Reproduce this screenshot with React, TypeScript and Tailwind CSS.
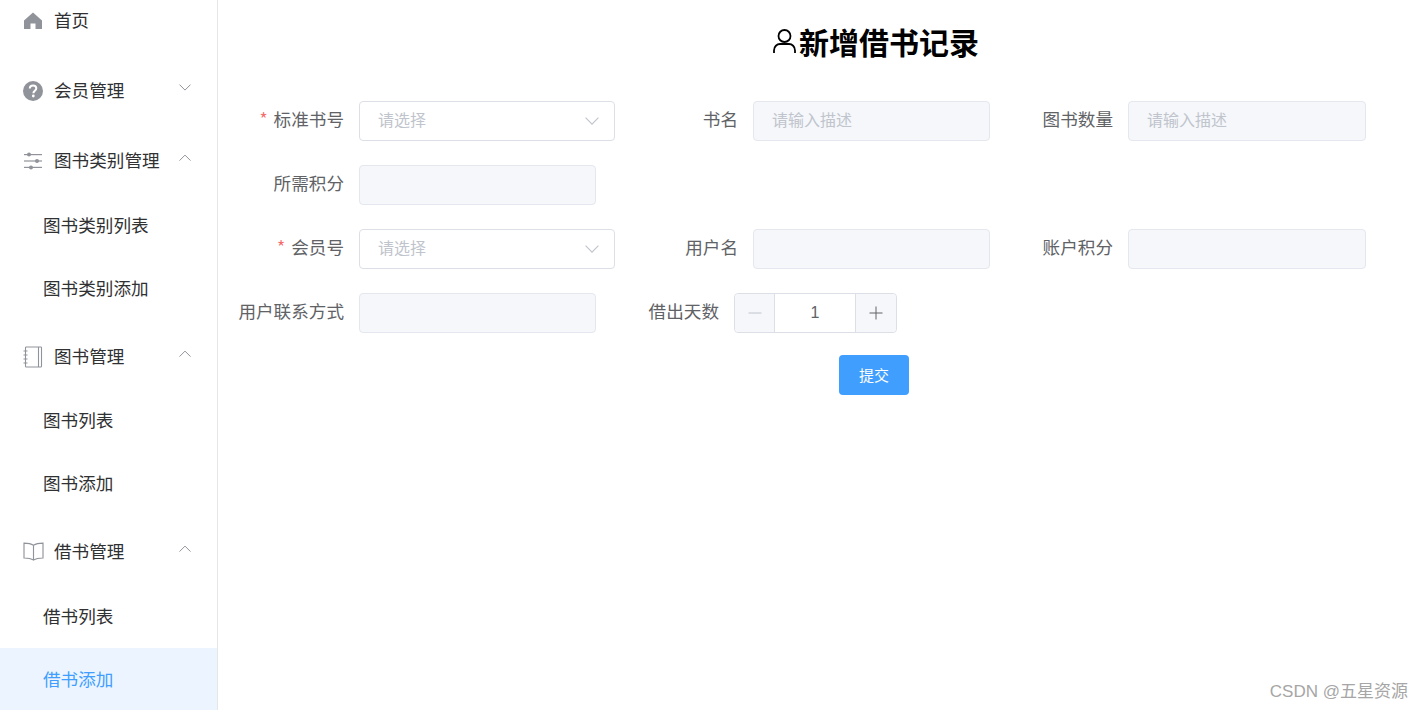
import React from "react";

const FONT = "font-['Microsoft_YaHei','Noto_Sans_CJK_SC','Noto_Sans',sans-serif]";

function HomeIcon() {
  return (
    <svg width="20" height="20" viewBox="0 0 20 20" fill="#909399">
      <path d="M10 1.500 19 9.500 19 18 12.500 18 12.500 12.500 7.500 12.500 7.500 18 1 18 1 9.500Z" />
    </svg>
  );
}

function QuestionIcon() {
  return (
    <svg width="22" height="22" viewBox="0 0 22 22">
      <circle cx="11" cy="11" r="10" fill="#909399" />
      <path d="M7.800 8.600c0-2 1.400-3.200 3.300-3.200s3.200 1.200 3.200 2.900c0 2.400-2.900 2.500-2.900 4.900" fill="none" stroke="#fff" strokeWidth="2" />
      <circle cx="11.300" cy="16" r="1.400" fill="#fff" />
    </svg>
  );
}

function SlidersIcon() {
  return (
    <svg width="20" height="20" viewBox="0 0 20 20" fill="#909399">
      <rect x="1" y="3" width="18" height="1.200" />
      <rect x="1" y="9.400" width="18" height="1.200" />
      <rect x="1" y="15.800" width="18" height="1.200" />
      <circle cx="6" cy="3.600" r="2" />
      <circle cx="14" cy="10" r="2" />
      <circle cx="8" cy="16.400" r="2" />
    </svg>
  );
}

function NotebookIcon() {
  return (
    <svg width="20" height="22" viewBox="0 0 20 22" fill="none" stroke="#909399" strokeWidth="1.100">
      <rect x="2.500" y="1" width="16" height="20" rx="0.800" />
      <path d="M15.500 1v20M0.500 5h4M0.500 9h4M0.500 13h4M0.500 17h4" />
    </svg>
  );
}

function BookIcon() {
  return (
    <svg width="21" height="19" viewBox="0 0 22 20" fill="none" stroke="#909399" strokeWidth="1.200">
      <path d="M11 3.500C8.500 1.800 5 1.200 1 1.200v15.600c4 0 7.500.6 10 2.200 2.500-1.600 6-2.200 10-2.200V1.200c-4 0-7.500.6-10 2.300Z" />
      <path d="M11 3.500V19" />
    </svg>
  );
}

function UserIcon() {
  return (
    <svg width="23" height="26" viewBox="0 0 23 26" fill="none" stroke="#000" strokeWidth="1.800">
      <circle cx="11.500" cy="8" r="6" />
      <path d="M1 25v-2.500c0-4 3-6.500 6-6.500h9c3 0 6 2.500 6 6.500V25" />
    </svg>
  );
}

function Chevron({ up, size = 12, color = "#909399" }: { up?: boolean; size?: number; color?: string }) {
  return (
    <svg width={size} height={size * 0.6} viewBox="0 0 12 7" fill="none" stroke={color} strokeWidth="1">
      <path d={up ? "M0.500 6.500 6 1 11.500 6.500" : "M0.500 0.500 6 6 11.500 0.500"} />
    </svg>
  );
}

function TopItem({ icon, label, h, arrow }: { icon: React.ReactNode; label: string; h: string; arrow?: "up" | "down" }) {
  return (
    <div className={`flex items-center pb-[1px] pl-[22px] pr-[26px] text-[17.6px] text-[#303133] ${h}`}>
      <span className="flex w-[22px] justify-center">{icon}</span>
      <span className="ml-[10px]">{label}</span>
      {arrow && (
        <span className="ml-auto -mt-[5px]">
          <Chevron up={arrow === "up"} />
        </span>
      )}
    </div>
  );
}

function SubItem({ label, h, active }: { label: string; h: string; active?: boolean }) {
  return (
    <div className={`flex items-center pl-[43px] text-[17.6px] ${h} ${active ? "bg-[#ecf5ff] text-[#409eff]" : "pb-[1px] text-[#303133]"}`}>
      {label}
    </div>
  );
}

function Label({ w, required, children }: { w: string; required?: boolean; children: React.ReactNode }) {
  return (
    <label className={`shrink-0 pr-[15px] text-right text-[17.6px] leading-[36px] text-[#606266] ${w}`}>
      {required && <span className="mr-[6px] text-[#f56c6c]">*</span>}
      {children}
    </label>
  );
}

function SelectBox() {
  return (
    <div className="flex h-[40px] w-[256px] shrink-0 items-center justify-between rounded-[4px] border border-[#dcdfe6] bg-white pl-[18px] pr-[15px] text-[16px] text-[#c0c4cc]">
      <span className="pb-[4px]">请选择</span>
      <Chevron size={14} color="#c0c4cc" />
    </div>
  );
}

function DisabledInput({ w, placeholder }: { w: string; placeholder?: string }) {
  return (
    <div className={`flex h-[40px] shrink-0 items-center rounded-[4px] border border-[#e4e7ed] bg-[#f5f7fa] pb-[4px] pl-[18px] text-[16px] text-[#c0c4cc] ${w}`}>
      {placeholder}
    </div>
  );
}

function NumberInput() {
  return (
    <div className="flex h-[40px] w-[163px] shrink-0 rounded-[4px] border border-[#dcdfe6] text-[#606266]">
      <div className="flex w-[40px] items-center justify-center rounded-l-[4px] border-r border-[#dcdfe6] bg-[#f5f7fa]">
        <svg width="14" height="14" viewBox="0 0 14 14" stroke="#c0c4cc" strokeWidth="1">
          <path d="M0.500 7h13" />
        </svg>
      </div>
      <div className="flex flex-1 items-center justify-center bg-white font-['Liberation_Sans',sans-serif] text-[16px]">1</div>
      <div className="flex w-[41px] items-center justify-center rounded-r-[4px] border-l border-[#dcdfe6] bg-[#f5f7fa]">
        <svg width="14" height="14" viewBox="0 0 14 14" stroke="#606266" strokeWidth="1">
          <path d="M0.500 7h13M7 0.500v13" />
        </svg>
      </div>
    </div>
  );
}

export default function App() {
  return (
    <div className={`relative flex h-[710px] w-[1423px] overflow-hidden bg-white ${FONT}`}>
      <aside className="w-[218px] shrink-0 border-r border-[#e6e6e6]">
        <div className="-mt-[14px]">
          <TopItem icon={<HomeIcon />} label="首页" h="h-[70px]" />
          <TopItem icon={<QuestionIcon />} label="会员管理" h="h-[70px]" arrow="down" />
          <TopItem icon={<SlidersIcon />} label="图书类别管理" h="h-[70px]" arrow="up" />
          <SubItem label="图书类别列表" h="h-[60px]" />
          <SubItem label="图书类别添加" h="h-[66px]" />
          <TopItem icon={<NotebookIcon />} label="图书管理" h="h-[70px]" arrow="up" />
          <SubItem label="图书列表" h="h-[58px]" />
          <SubItem label="图书添加" h="h-[68px]" />
          <TopItem icon={<BookIcon />} label="借书管理" h="h-[68px]" arrow="up" />
          <SubItem label="借书列表" h="h-[62px]" />
          <SubItem label="借书添加" h="h-[62px]" active />
        </div>
      </aside>

      <main className="flex-1 pl-[11px]">
        <h2 className="flex h-[87px] items-center justify-center pb-[6px] pl-[192px] pr-[92px] text-[30px] font-bold leading-none text-black">
          <UserIcon />
          <span className="ml-[3px]">新增借书记录</span>
        </h2>
        <div className="flex flex-col gap-[24px] pt-[14px]">
          <div className="flex">
            <Label w="w-[130px]" required>标准书号</Label>
            <SelectBox />
            <Label w="w-[138px]">书名</Label>
            <DisabledInput w="w-[237px]" placeholder="请输入描述" />
            <Label w="w-[138px]">图书数量</Label>
            <DisabledInput w="w-[238px]" placeholder="请输入描述" />
          </div>
          <div className="flex">
            <Label w="w-[130px]">所需积分</Label>
            <DisabledInput w="w-[237px]" />
          </div>
          <div className="flex">
            <Label w="w-[130px]" required>会员号</Label>
            <SelectBox />
            <Label w="w-[138px]">用户名</Label>
            <DisabledInput w="w-[237px]" />
            <Label w="w-[138px]">账户积分</Label>
            <DisabledInput w="w-[238px]" />
          </div>
          <div className="flex">
            <Label w="w-[130px]">用户联系方式</Label>
            <DisabledInput w="w-[237px]" />
            <Label w="w-[138px]">借出天数</Label>
            <NumberInput />
          </div>
        </div>
        <div className="mt-[22px] pl-[610px]">
          <button className="h-[40px] w-[70px] rounded-[4px] bg-[#409eff] text-[15px] text-white">提交</button>
        </div>
      </main>

      <span className="absolute bottom-[7px] right-[15px] font-['Liberation_Sans','Noto_Sans_CJK_SC',sans-serif] text-[17px] leading-[22px] text-[#a6a6a6]">CSDN @五星资源</span>
    </div>
  );
}
